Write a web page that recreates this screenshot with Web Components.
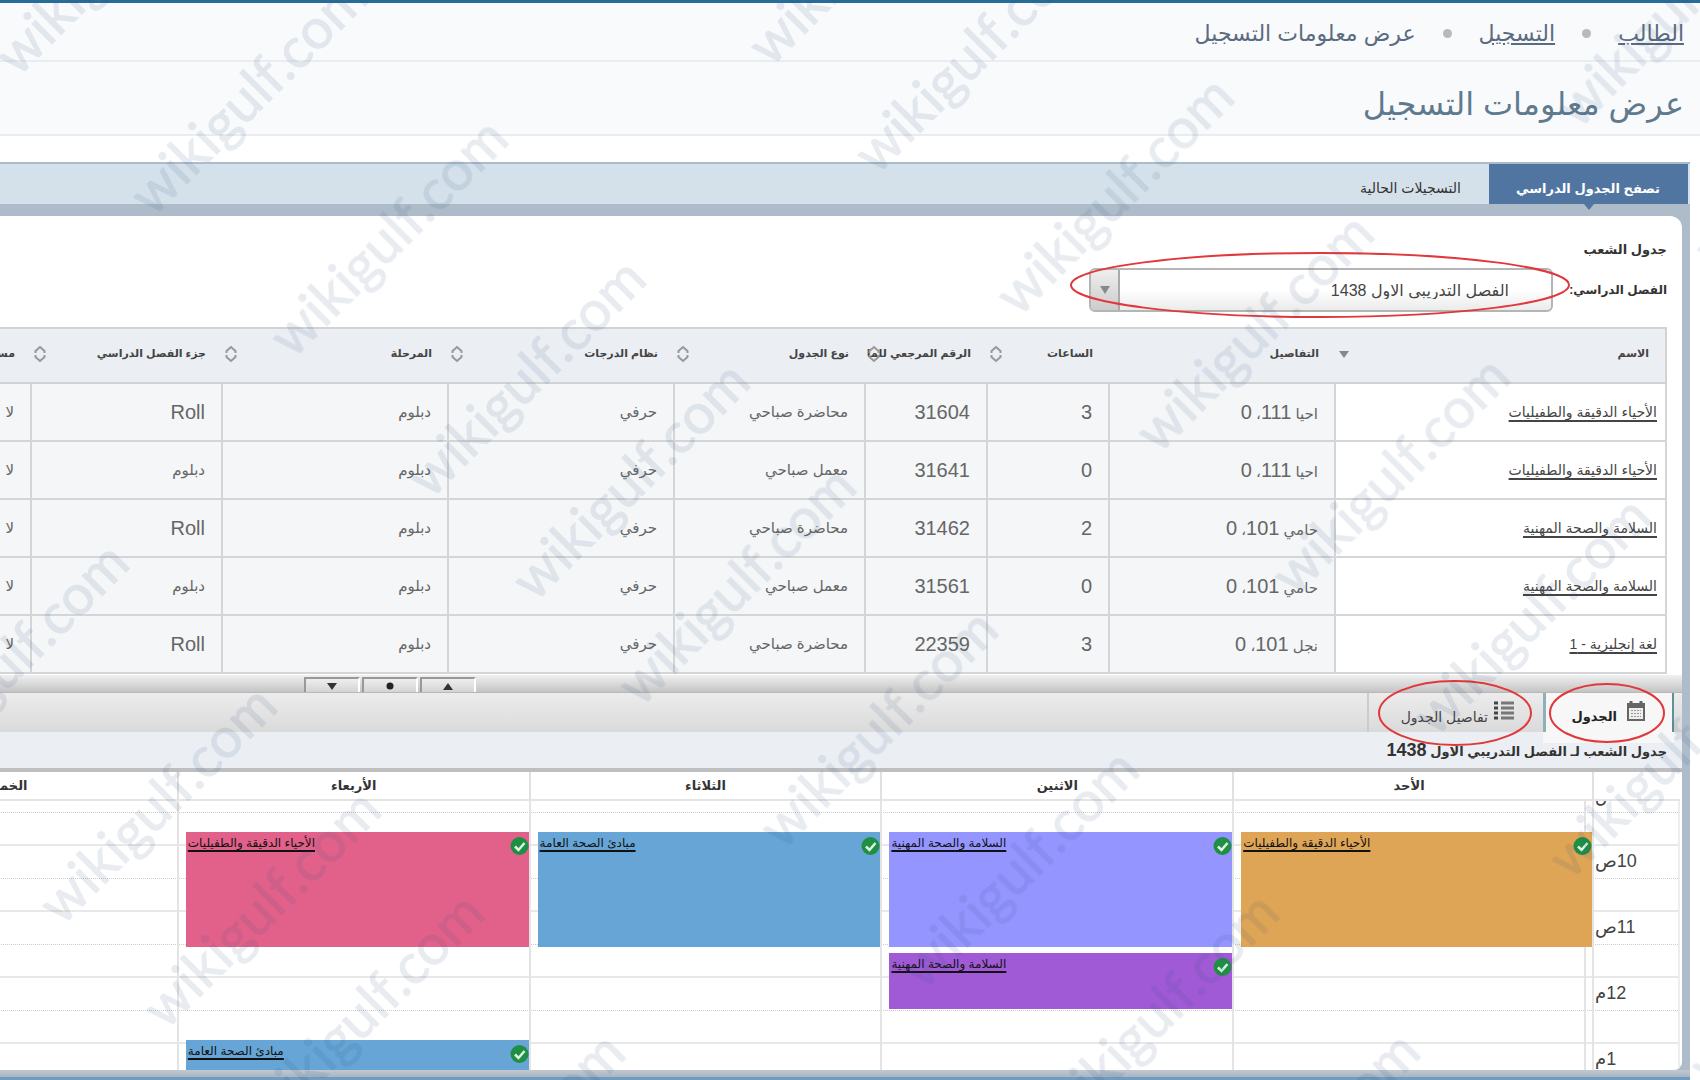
<!DOCTYPE html>
<html lang="ar" dir="rtl">
<head>
<meta charset="utf-8">
<title>عرض معلومات التسجيل</title>
<style>
html{background:#fff}
body{margin:0;overflow:hidden;font-family:"Liberation Sans","DejaVu Sans",sans-serif;color:#333;position:relative;min-height:100vh}
</style>
</head>
<body>
<registration-page></registration-page>
<script>
function define(name, html) {
  customElements.define(name, class extends HTMLElement {
    constructor() {
      super();
      const t = document.createElement('template');
      t.innerHTML = typeof html === 'function' ? html() : html;
      this.attachShadow({mode: 'open'}).appendChild(t.content.cloneNode(true));
    }
  });
}

define('bread-crumb', `
<style>
:host{display:block;background:#f9fafc;border-top:3px solid #2a6c99;border-bottom:2px solid #e9edf0}
nav{display:flex;align-items:center;justify-content:flex-start;height:53px;padding:4px 16px 0;gap:27px;font-size:22px;color:#5b6b80}
a{color:#5b6b80}
i{width:9px;height:9px;border-radius:50%;background:#b9b9b9}
</style>
<nav><a href="#">الطالب</a><i></i><a href="#">التسجيل</a><i></i><span>عرض معلومات التسجيل</span></nav>`);

define('page-title', `
<style>
:host{display:block;background:#f9fafc;border-bottom:2px solid #e9edf0}
h1{margin:0;padding:12px 16px 0;font-size:32px;font-weight:400;line-height:60px;color:#5f7a8e}
</style>
<h1><slot></slot></h1>`);

define('tab-strip', `
<style>
:host{display:flex;height:40px;background:#d5e1ea;border-top:2px solid #a9bccb;padding-inline-start:2px}
button{border:0;background:none;font:14px "Liberation Sans","DejaVu Sans",sans-serif;color:#333;padding:8px 28px 0;margin:0;white-space:nowrap}
button.on{background:#5175a1;color:#fff;font-size:13px;font-weight:700;position:relative;width:199px}
button.on::after{content:"";position:absolute;top:100%;left:50%;margin-left:-5px;border:5px solid transparent;border-top:6px solid #5175a1;border-bottom:0}
</style>
<button class="on">تصفح الجدول الدراسي</button><button>التسجيلات الحالية</button>`);

define('term-picker', `
<style>
:host{display:block;padding:20px 15px 0}
h2{margin:0;font-size:13px;line-height:28px;color:#333}
.row{display:flex;align-items:center;justify-content:flex-start;height:44px;margin-top:4px}
label{font-size:12px;font-weight:700;width:114px;white-space:nowrap}
.box{display:grid;width:464px;height:44px}
select{grid-area:1/1;appearance:none;margin:0;border:2px solid #b5b5b5;border-radius:6px;background:linear-gradient(#fff 50%,#ebebeb);padding:0 42px 0 32px;font:16px "Liberation Sans","DejaVu Sans",sans-serif;color:#444}
.arrow{grid-area:1/1;justify-self:end;width:27px;display:flex;align-items:center;justify-content:center;border-right:2px solid #aaa;border-radius:4px 0 0 4px;background:linear-gradient(#eee,#ccc);margin:2px 0 2px 2px;pointer-events:none}
</style>
<h2>جدول الشعب</h2>
<div class="row"><label for="term">الفصل الدراسي:</label>
<div class="box"><select id="term"><option>الفصل التدريبي الاول 1438</option></select>
<span class="arrow"><svg width="10" height="10"><path d="M0 1h10L5 9z" fill="#888"/></svg></span></div></div>`);

const SORT = '<svg class="s" width="12" height="18" viewBox="0 0 12 18" fill="none" stroke="#999" stroke-width="2"><path d="M1.500 8V6L6 2l4.500 4v2M1.500 10v2L6 16l4.500-4v-2"/></svg>';
const DESC = '<svg class="s" width="12" height="18" viewBox="0 0 12 18"><path d="M1 6h10L6 13z" fill="#888"/></svg>';
define('sections-table', () => {
  const heads = [['الاسم', DESC], ['التفاصيل', ''], ['الساعات', SORT], ['الرقم المرجعي للما', SORT], ['نوع الجدول', SORT], ['نظام الدرجات', SORT], ['المرحلة', SORT], ['جزء الفصل الدراسي', SORT], ['مسـ', '']];
  const rows = [
    ['الأحياء الدقيقة والطفيليات', 'احيا <b>111</b>، <b>0</b>', 3, 31604, 'محاضرة صباحي', 'Roll'],
    ['الأحياء الدقيقة والطفيليات', 'احيا <b>111</b>، <b>0</b>', 0, 31641, 'معمل صباحي', 'دبلوم'],
    ['السلامة والصحة المهنية', 'حامي <b>101</b>، <b>0</b>', 2, 31462, 'محاضرة صباحي', 'Roll'],
    ['السلامة والصحة المهنية', 'حامي <b>101</b>، <b>0</b>', 0, 31561, 'معمل صباحي', 'دبلوم'],
    ['لغة إنجليزية - 1', 'نجل <b>101</b>، <b>0</b>', 3, 22359, 'محاضرة صباحي', 'Roll']];
  return `
<style>
:host{display:block;margin:15px 15px 0 0;height:348px;overflow:hidden}
table{table-layout:fixed;width:calc(100% + 160px);border-collapse:collapse;font-size:15px;color:#666}
th{box-sizing:border-box;height:55px;padding:0 16px 4px;background:#ebeff4;border:solid #d0d3d4;border-width:2px 0;text-align:start;font-size:11px;color:#444;white-space:nowrap}
th:first-child{border-right-width:2px}
th div{display:flex;align-items:center;justify-content:space-between;margin-left:-13px}
th span{width:0;flex:1}
.s{flex:none}
td{height:56px;padding:0 16px;background:#f4f6f8;border:2px solid #d3d5d6;white-space:nowrap}
td:first-child{background:#fff;padding:0 8px;font-size:14px}
td b{font-weight:400;font-size:20px}
td.n{font-size:20px}
a{color:#444;text-underline-offset:3px;text-decoration-thickness:2px}
</style>
<table><colgroup><col style="width:331px"><col style="width:226px"><col style="width:122px"><col style="width:122px"><col style="width:191px"><col style="width:226px"><col style="width:226px"><col style="width:191px"><col></colgroup>
<thead><tr>${heads.map(h => `<th><div><span>${h[0]}</span>${h[1]}</div></th>`).join('')}</tr></thead>
<tbody>${rows.map(r => `<tr><td><a href="#">${r[0]}</a></td><td>${r[1]}</td><td class="n">${r[2]}</td><td class="n">${r[3]}</td><td>${r[4]}</td><td>حرفي</td><td>دبلوم</td><td${r[5] === 'Roll' ? ' class="n"' : ''}>${r[5]}</td><td>لا</td></tr>`).join('')}</tbody></table>`;
});

define('split-bar', `
<style>
:host{display:flex;direction:ltr;height:18px;box-sizing:border-box;padding:2px 0 0 304px;gap:2px;background:linear-gradient(#f0f0f0,#c4c4c4);border-bottom:1px solid #b8b8b8}
button{width:56px;padding:0;border:2px solid #fff;border-top-color:#999;border-left-color:#999;border-bottom:0;background:linear-gradient(#eee,#d4d4d4);display:flex;align-items:flex-end;justify-content:center}
</style>
<button aria-label="down"><svg width="10" height="10"><path d="M0 1h10L5 8z" fill="#333"/></svg></button>
<button aria-label="reset"><svg width="10" height="10"><circle cx="5" cy="4" r="3.500" fill="#222"/></svg></button>
<button aria-label="up"><svg width="10" height="10"><path d="M0 8h10L5 1z" fill="#333"/></svg></button>`);

define('view-tabs', `
<style>
:host{display:flex;height:39px;background:linear-gradient(#ececec,#dadada);padding-inline-start:8px}
button{margin:0;padding:0 29px 0 0;border:0;background:none;display:flex;align-items:flex-start;gap:10px;font:14px "Liberation Sans","DejaVu Sans",sans-serif;color:#444}
svg{margin-top:8px;flex:none}
span{margin-top:12px;line-height:24px}
.on{width:131px;height:50px;box-sizing:border-box;background:linear-gradient(#5f9199,#5f9199) right top/2px 39px no-repeat,linear-gradient(#8fb0b6,#8fb0b6) left top/3px 39px no-repeat,#f7f7f7;font-size:13px;font-weight:700;color:#222}
.off{width:176px;border-left:2px solid #ccc;gap:6px}
</style>
<button class="on"><svg width="18" height="20" viewBox="0 0 18 20"><path d="M1 3h16v16H1z" fill="#eee" stroke="#666" stroke-width="2"/><path d="M1 3h16v4H1z" fill="#666"/><path d="M4 0v5M14 0v5" stroke="#666" stroke-width="3"/><path d="M4 9.500h10M4 12.500h10M4 15.500h10" stroke="#999" stroke-dasharray="2 1"/></svg><span>الجدول</span></button>
<button class="off"><svg width="20" height="19" viewBox="0 0 20 19"><path d="M0 2h4M0 7h4M0 12h4M0 17h4" stroke="#444" stroke-width="3"/><path d="M7 2h13M7 7h13M7 12h13M7 17h13" stroke="#777" stroke-width="3"/></svg><span>تفاصيل الجدول</span></button>`);

define('calendar-event', `
<style>
:host{display:flex;box-sizing:border-box;direction:ltr;justify-content:space-between;align-items:flex-start;background:var(--c);height:var(--h);margin-top:var(--gap);padding:3px 0 0 2px;flex:none}
a{font-size:12px;line-height:16px;color:#111;text-underline-offset:3px;text-decoration-thickness:2px;direction:rtl}
svg{margin-top:2px}
</style>
<a href="#"><slot></slot></a>
<svg width="19" height="18" viewBox="0 0 19 18"><circle cx="9.500" cy="9" r="9" fill="#1f8f43"/><path d="M5 9.500l3.500 3.500L14.500 6" fill="none" stroke="#dff2e2" stroke-width="2.500"/></svg>`);

define('week-calendar', () => {
  const hours = ['9ص', '10ص', '11ص', '12م', '1م'];
  let slots = '<i></i>';
  for (let k = 0; k < 4; k++) slots += '<i></i><i></i>';
  const times = hours.map(h => `<div>${h}</div><div></div>`).join('');
  return `
<style>
:host{display:block;margin-left:-175px;padding-right:2px}
.head,.cols{display:grid;grid-template-columns:88px 8px repeat(5,1fr)}
h3{margin:0;background:#ebeff4;font-size:13px;line-height:36px;height:36px;color:#333;padding-right:15px;margin-right:-2px;border-bottom:4px solid #bcbec0}
h3 b{font-size:18px}
.head{height:29px;border-bottom:2px solid #e4e4e4;box-sizing:border-box;font-size:13px;font-weight:700;line-height:28px;text-align:center;color:#333}
.head>*{border-left:2px solid #e0e0e0}
.head>:nth-child(2){border:0}
.view{height:269px;overflow:hidden}
.body{display:grid;margin-top:-21px}
.lines,.cols{grid-area:1/1}
.lines i{display:block;height:33px;box-sizing:border-box;border-bottom:2px solid #e8e8e8}
.lines i:nth-child(odd){border-bottom:1px dotted #ccc}
.cols>div{border-left:2px solid #e4e4e4}
.times{direction:rtl;text-align:left;font-size:18px;color:#444;padding-left:1px;border-right:2px solid #eee}
.times div{height:33px;line-height:30px}
.day{display:flex;flex-direction:column;padding:0 0 0 7px}
.day:nth-child(3) calendar-event{margin-right:-8px}
.day>:first-child{--gap:52px}
</style>
<h3>جدول الشعب لـ الفصل التدريبي الاول <b>1438</b></h3>
<div class="head"><span></span><span></span><span>الأحد</span><span>الاثنين</span><span>الثلاثاء</span><span>الأربعاء</span><span>الخميس</span></div>
<div class="view"><div class="body"><div class="lines">${slots}</div>
<div class="cols"><div class="times">${times}</div><div></div>
<div class="day"><calendar-event style="--c:#dfa556;--h:115px">الأحياء الدقيقة والطفيليات</calendar-event></div>
<div class="day"><calendar-event style="--c:#9595ff;--h:115px">السلامة والصحة المهنية</calendar-event><calendar-event style="--c:#a05ad6;--h:56px;--gap:6px">السلامة والصحة المهنية</calendar-event></div>
<div class="day"><calendar-event style="--c:#66a5d5;--h:115px">مبادئ الصحة العامة</calendar-event></div>
<div class="day"><calendar-event style="--c:#e2618a;--h:115px">الأحياء الدقيقة والطفيليات</calendar-event><calendar-event style="--c:#66a5d5;--h:60px;--gap:93px">مبادئ الصحة العامة</calendar-event></div>
<div class="day"></div></div></div></div>`;
});

define('red-marks', `
<style>:host{position:absolute;top:0;right:0;width:1700px;height:1080px;pointer-events:none}</style>
<svg width="1700" height="1080" fill="none" stroke="#e0383b" stroke-width="2"><ellipse cx="1320" cy="285" rx="249" ry="32"/><ellipse cx="1607" cy="713" rx="57" ry="29"/><ellipse cx="1455" cy="713" rx="76" ry="32"/></svg>`);

define('water-mark', () => {
  const p = [[18,78],[153,218],[293,360],[431,500],[535,603],[641,708],[783,851],[924,991],[1064,1134],[1205,1273],
    [-222,642],[-86,784],[62,927],[166,1031],[269,1134],[410,1274],
    [771,68],[877,176],[1019,318],[1159,455],[1295,598],[1436,738],[1571,881],[1579,130],[1717,271],[1712,1088]];
  return `
<style>:host{position:absolute;top:0;right:0;width:1700px;height:1080px;overflow:hidden;pointer-events:none}
g{opacity:.11}
text{font:400 56px Lato,sans-serif;fill:#2f5583;stroke:#2f5583;stroke-width:1px;direction:ltr}</style>
<svg width="1700" height="1080" aria-hidden="true"><g>${p.map(q => `<text transform="translate(${q[0]} ${q[1]}) rotate(-45)">wikigulf.com</text>`).join('')}</g></svg>`;
});

define('registration-page', `
<style>
:host{display:block}
.panel{margin:26px 10px 0 0;background:#aebcca;border-bottom:3px solid #6f9cc0}
.inner{margin:12px 8px 0 0;background:#fff;border-radius:0 12px 8px 0;overflow:hidden}
.foot{height:7px;background:linear-gradient(#c3c8cd,#a6b6c6)}
</style>
<bread-crumb></bread-crumb>
<page-title>عرض معلومات التسجيل</page-title>
<div class="panel"><tab-strip></tab-strip>
<div class="inner"><term-picker></term-picker><sections-table></sections-table><split-bar></split-bar><view-tabs></view-tabs><week-calendar></week-calendar></div><div class="foot"></div></div>
<red-marks></red-marks><water-mark></water-mark>`);
</script>
</body>
</html>
